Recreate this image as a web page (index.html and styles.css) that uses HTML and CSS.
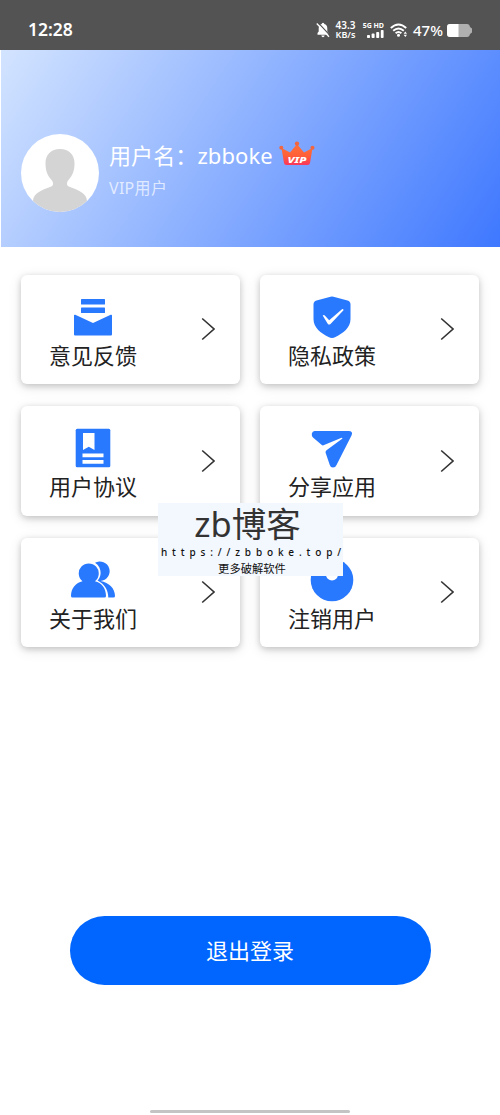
FILE: index.html
```html
<!DOCTYPE html>
<html lang="zh-CN">
<head>
<meta charset="utf-8">
<title>用户中心</title>
<link rel="stylesheet" href="styles.css">
</head>
<body>
<header class="status">
  <span class="clock">12:28</span>
  <div class="indicators">
    <svg class="bell" width="14" height="16" viewBox="0 0 14 16"><path d="M1.500 12.800V11l1.200-1.500V6.500Q2.700 3 5.800 2.100V1.500Q7 .1 8.200 1.500V2.100Q11.300 3 11.300 6.500V9.500L12.500 11V12.800ZM5.300 13.500h3.400Q8.300 15.200 7 15.200T5.300 13.500Z" fill="#fff"/><path d="M2 .6 14.200 13.500" stroke="#535353" stroke-width="1.200"/><path d="M.8 1.500 13 14.800" stroke="#fff" stroke-width="1.300"/></svg>
    <div class="speed"><span>43.3</span><span>KB/s</span></div>
    <div class="cell"><span>5G HD</span><svg width="17" height="8" viewBox="0 0 17 8" fill="#fff"><rect y="5" width="3" height="3" rx=".8"/><rect x="4.600" y="3.600" width="3" height="4.400" rx=".8"/><rect x="9.200" y="2" width="3" height="6" rx=".8"/><rect x="13.800" width="2.800" height="8" rx=".8"/></svg></div>
    <svg class="wifi" width="18" height="15" viewBox="0 0 18 15"><g fill="none" stroke="#fff" stroke-width="1.900"><path d="M.8 5Q8.500-2.200 16.200 5"/><path d="M3.200 7.800Q8.500 3 13.800 7.800"/><path d="M5.600 10.300Q8.500 7.800 11.400 10.300"/></g><circle cx="8.500" cy="12.300" r="1.500" fill="#fff"/><path d="m13.600 10.800 1.700-2.300L17 10.800ZM13.600 11.800l1.700 2.300L17 11.800Z" fill="#fff"/></svg>
    <span class="percent">47%</span>
    <svg class="battery" width="26" height="13" viewBox="0 0 26 13"><path d="M3 0H20Q22.500 0 23 3L25 4.500V8.500L23 10Q22.500 13 20 13H3Q0 13 0 10V3Q0 0 3 0Z" fill="#b0b0b0"/><path d="M3 0H11.500V13H3Q0 13 0 10V3Q0 0 3 0Z" fill="#fff"/></svg>
  </div>
</header>

<section class="profile">
  <svg class="avatar" width="78" height="78" viewBox="0 0 78 78"><defs><clipPath id="round"><circle cx="39" cy="39" r="39"/></clipPath></defs><circle cx="39" cy="39" r="39" fill="#fff"/><path clip-path="url(#round)" d="M39 15C30 15 24.500 21 24.500 29C24.500 36 26 41 30.500 46C33 49 32.500 52 29 53C20 56 12 60 12 67V78H66V67C66 60 58 56 49 53C45.500 52 45 49 47.500 46C52 41 53.500 36 53.500 29C53.500 21 48 15 39 15Z" fill="#d4d4d4"/></svg>
  <div class="identity">
    <div class="name"><span>用户名：zbboke</span>
      <svg class="crown" width="36" height="26" viewBox="0 0 36 26"><defs><linearGradient id="flame" x2="0" y2="1"><stop stop-color="#ff713b"/><stop offset=".55" stop-color="#ff6037"/><stop offset="1" stop-color="#f9365c"/></linearGradient></defs><path fill="url(#flame)" d="M2.500 7 11 11.500 18 3 25 11.500 33.500 7 31 22Q30.800 24 28.500 24H7.500Q5.200 24 5 22Z"/><g fill="#f1663f"><circle cx="2.300" cy="6.800" r="2"/><circle cx="18" cy="2.600" r="2.200"/><circle cx="33.500" cy="6.800" r="2"/></g><text class="crown-text" x="8.500" y="22" textLength="19" lengthAdjust="spacingAndGlyphs">VIP</text></svg>
    </div>
    <div class="level">VIP用户</div>
  </div>
</section>

<main class="grid">
  <a class="card"><span class="entry"><svg class="icon" width="44" height="44" viewBox="0 0 44 44" fill="#2979ff"><rect x="10" y="3" width="24" height="5.500" rx=".6"/><rect x="10" y="11.600" width="24" height="5.400" rx=".6"/><path d="M3 19.500Q3 18.300 4.300 18.800L22 27 39.700 18.800Q41 18.300 41 19.500V38.500Q41 39.500 40 39.500H4Q3 39.500 3 38.500Z"/></svg><span class="label">意见反馈</span></span><svg class="arrow" width="14" height="24" viewBox="0 0 14 24"><path d="m1.200 1.500 11.800 10.500-11.800 10.500"/></svg></a>
  <a class="card"><span class="entry"><svg class="icon" width="44" height="44" viewBox="0 0 44 44"><path d="M20.500.8Q22 .3 23.500.8L37.500 4.500Q40.500 5.300 40.500 8.500V23C40.500 32 33 37 25.500 41Q22 42.800 18.500 41C11 37 3.500 32 3.500 23V8.500Q3.500 5.300 6.500 4.500Z" fill="#2979ff"/><path d="M12.700 19.500Q14 18.500 15 19.700L19.200 24.300 32 13.200Q33.500 12.700 33.500 14.200L20.500 28Q19 29.300 17.700 27.700Z" fill="#fff"/></svg><span class="label">隐私政策</span></span><svg class="arrow" width="14" height="24" viewBox="0 0 14 24"><path d="m1.200 1.500 11.800 10.500-11.800 10.500"/></svg></a>
  <a class="card"><span class="entry"><svg class="icon" width="44" height="44" viewBox="0 0 44 44"><rect x="4.700" y="1.700" width="34.600" height="38.500" rx="1.500" fill="#2979ff"/><path d="M12 6H23.500V23L17.800 19.700 12 23ZM11.500 26.500h21V30.300h-21ZM11.500 33h21v3.700h-21Z" fill="#fff"/></svg><span class="label">用户协议</span></span><svg class="arrow" width="14" height="24" viewBox="0 0 14 24"><path d="m1.200 1.500 11.800 10.500-11.800 10.500"/></svg></a>
  <a class="card"><span class="entry"><svg class="icon" width="44" height="44" viewBox="0 0 44 44" fill="#2979ff"><path d="M4.500 4H38.500Q43.500 4 41.500 8.500L26.500 38Q25.500 40.500 23 40.500T19.800 38L15.600 25.800Q15.200 24.300 16.500 23.200L32.500 11.500Q32 10.300 31 11L13.500 18.300Q12.500 18.600 11.500 17.800L3 10.500Q1.500 9 1.800 6.500 2.500 4 4.500 4Z"/></svg><span class="label">分享应用</span></span><svg class="arrow" width="14" height="24" viewBox="0 0 14 24"><path d="m1.200 1.500 11.800 10.500-11.800 10.500"/></svg></a>
  <a class="card"><span class="entry"><svg class="icon" width="44" height="44" viewBox="0 0 44 44"><path d="M24 3.700A9.800 9.800 0 1 1 29.500 22C38 23.500 44 29.500 44 37Q44 38.500 42.500 38.500H37.300C37.300 31 33.500 25 26.500 21.500C31 17 31 8 24 3.700Z" fill="#2979ff"/><path d="M11.500 22.200A10 10 0 1 1 24 22.200C30.500 23.500 35 29 35 37Q35 38.500 33.500 38.500H1.500Q0 38.500 0 37C0 29 5 23.500 11.500 22.200Z" fill="#2979ff"/></svg><span class="label">关于我们</span></span><svg class="arrow" width="14" height="24" viewBox="0 0 14 24"><path d="m1.200 1.500 11.800 10.500-11.800 10.500"/></svg></a>
  <a class="card"><span class="entry"><svg class="icon" width="44" height="44" viewBox="0 0 44 44"><circle cx="22" cy="21" r="21.300" fill="#2979ff"/><circle cx="22" cy="15.500" r="6" fill="#fff"/></svg><span class="label">注销用户</span></span><svg class="arrow" width="14" height="24" viewBox="0 0 14 24"><path d="m1.200 1.500 11.800 10.500-11.800 10.500"/></svg></a>
</main>

<button class="logout">退出登录</button>
<div class="home-bar"></div>

<aside class="watermark">
  <div class="mark-title">zb博客</div>
  <div class="mark-url">https://zbboke.top/</div>
  <div class="mark-note">更多破解软件</div>
</aside>
</body>
</html>
```
FILE: styles.css
```css
* { box-sizing: border-box; }
body {
  position: relative;
  margin: 0;
  height: 1115px;
  display: flex;
  flex-direction: column;
  overflow: hidden;
  background: #fff;
  font-family: "Noto Sans", "Noto Sans CJK SC", sans-serif;
}
.status {
  height: 50px;
  flex: none;
  display: flex;
  justify-content: space-between;
  align-items: center;
  padding: 10px 27px 0 28px;
  background: #535353;
  color: #fff;
}
.clock { padding-bottom: 2px; font-size: 17.500px; font-weight: 600; line-height: 38px; }
.indicators { display: flex; align-items: center; }
.bell { margin-right: 1px; }
.speed {
  display: flex;
  flex-direction: column;
  align-items: center;
  width: 23px;
  margin-left: 3px;
  font-size: 10px;
  font-weight: 600;
  line-height: 9px;
}
.speed span:last-child { font-size: 9px; }
.cell {
  display: flex;
  flex-direction: column;
  align-items: flex-end;
  width: 24px;
  margin-left: 3px;
  font-size: 7px;
  font-weight: 700;
  line-height: 8px;
  white-space: nowrap;
}
.wifi { margin-left: 6px; }
.percent { width: 31px; margin-left: 5px; font-size: 15px; font-weight: 500; line-height: 20px; }
.battery { margin-left: 3px; }
.profile {
  height: 197px;
  flex: none;
  display: flex;
  margin-left: 1px;
  padding: 84px 0 0 20px;
  background: linear-gradient(123deg, #d3e4ff, #3f78ff);
  color: #fff;
}
.avatar { flex: none; }
.identity { margin-left: 10px; padding-top: 6px; }
.name { display: flex; height: 30px; font-size: 22px; line-height: 30px; white-space: nowrap; }
.name span { width: 164px; letter-spacing: .1px; }
.crown { margin: 1px 0 0 6px; }
.crown-text { font: italic 800 9px "Noto Sans", sans-serif; fill: #fff; }
.level { margin-top: 7px; font-size: 16px; line-height: 22px; letter-spacing: .3px; color: rgba(255, 255, 255, .7); }
.grid {
  display: grid;
  grid-template-columns: 219px 219px;
  grid-auto-rows: 109.500px;
  gap: 22px 20px;
  padding: 27.500px 21px 0;
}
.card {
  display: flex;
  justify-content: space-between;
  align-items: center;
  padding: 0 25px 0 28px;
  border-radius: 6px;
  background: #fff;
  box-shadow: 0 2px 6px rgba(0, 0, 0, .18), 0 3px 14px rgba(0, 0, 0, .1);
}
.entry { display: flex; flex-direction: column; align-items: center; padding-top: 8px; }
.label { margin-top: -1px; font-size: 22px; line-height: 32px; color: #222; }
.arrow { fill: none; stroke: #333; stroke-width: 1.600; }
.logout {
  width: 361px;
  height: 69px;
  margin: 268.500px 0 0 69.500px;
  padding: 0;
  border: 0;
  border-radius: 35px;
  background: #06f;
  color: #fff;
  font: 22px/69px "Noto Sans", "Noto Sans CJK SC", sans-serif;
}
.home-bar { width: 200px; height: 3px; margin: 125px auto 0; border-radius: 2px; background: #c4c4c4; }
.watermark {
  position: absolute;
  left: 158px;
  top: 503px;
  width: 185px;
  height: 73px;
  background: #f3f8ff;
  color: #333;
  text-align: center;
  white-space: nowrap;
}
.mark-title { height: 43px; padding-right: 6px; font-size: 34.500px; line-height: 42px; }
.mark-url { height: 13px; padding-left: 3px; font-size: 10px; font-weight: 500; line-height: 13px; letter-spacing: 4.850px; text-align: left; color: #111; }
.mark-note { padding: 1px 0 0 3px; font-size: 11.300px; line-height: 18px; color: #111; }
```
